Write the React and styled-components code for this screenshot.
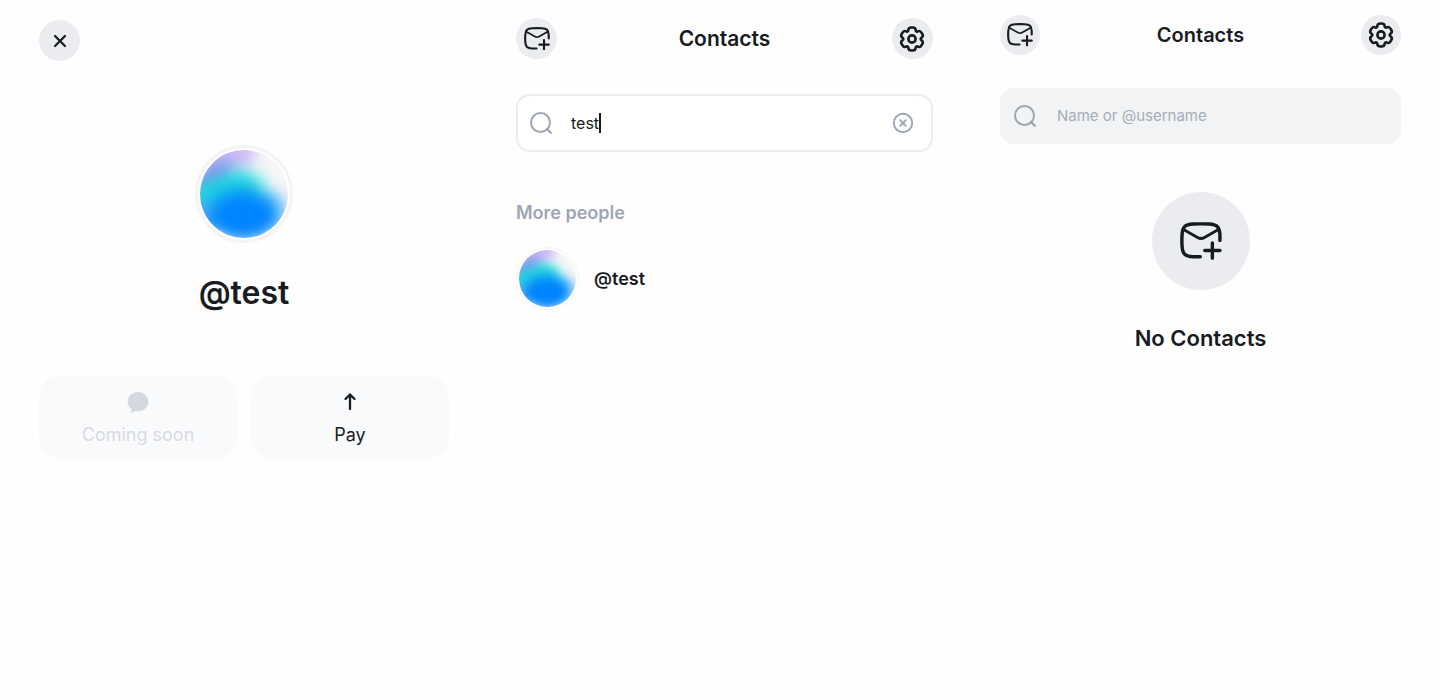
import React, { useId, useState } from 'react'
import styled, { createGlobalStyle } from 'styled-components'

const color = {
  text: '#181b21',
  muted: '#9ea6b3',
  placeholder: '#a6acb8',
  disabled: '#d8dade',
  circle: '#ebecf0',
  field: '#f2f3f5',
  card: '#f9fafc',
  ring: '#f4f4f5',
}

const GlobalStyle = createGlobalStyle`
  * {
    box-sizing: border-box;
  }

  body {
    margin: 0;
    background: #fefefe;
    color: ${color.text};
    font-family: Inter, 'Liberation Sans', sans-serif;
  }

  h1, h2, p, ul {
    margin: 0;
    padding: 0;
  }

  button, input {
    font: inherit;
    color: inherit;
    border: 0;
    padding: 0;
    background: none;
  }
`

const Board = styled.main`
  display: grid;
  grid-template-columns: 410fr 417fr 401fr;
  column-gap: 67px;
  padding: 0 39px;
`

const Screen = styled.section`
  min-width: 0;
  padding-top: ${(props) => props.$top}px;
`

const Profile = styled.div`
  display: flex;
  flex-direction: column;
  align-items: center;
  padding-top: 84px;
`

const ProfileName = styled.h1`
  margin-top: 30px;
  font-size: 32px;
  line-height: 40px;
  font-weight: 600;
`

const CircleButton = styled.button`
  display: flex;
  align-items: center;
  justify-content: center;
  flex: none;
  width: ${(props) => props.$size}px;
  height: ${(props) => props.$size}px;
  border-radius: 50%;
  background: ${color.circle};
`

const AvatarRing = styled.div`
  flex: none;
  width: ${(props) => (props.$large ? 98 : 63)}px;
  height: ${(props) => (props.$large ? 98 : 63)}px;
  padding: 2px;
  border: ${(props) => (props.$large ? 3 : 1)}px solid ${color.ring};
  border-radius: 50%;

  svg {
    display: block;
    width: 100%;
    height: 100%;
  }
`

const Actions = styled.div`
  display: grid;
  grid-template-columns: 1fr 1fr;
  gap: 14px;
  margin-top: 62px;
`

const ActionCard = styled.button`
  display: flex;
  flex-direction: column;
  align-items: center;
  gap: 9px;
  padding: 15px 12px 12px;
  border-radius: 22px;
  background: ${color.card};
  font-size: 18px;
  line-height: 24px;

  &:disabled {
    color: ${color.disabled};
  }
`

const HeaderBar = styled.header`
  display: flex;
  align-items: center;
  justify-content: space-between;
`

const HeaderTitle = styled.h1`
  font-size: ${(props) => props.$size}px;
  line-height: 28px;
  font-weight: 600;
`

const SearchField = styled.label`
  display: flex;
  align-items: center;
  height: ${(props) => (props.$active ? 58 : 56)}px;
  margin-top: ${(props) => (props.$active ? 35 : 33)}px;
  padding: ${(props) => (props.$active ? '0 17px 0 11px' : '0 13px')};
  border: ${(props) => (props.$active ? '2px solid #ebebf0' : '0')};
  border-radius: 14px;
  background: ${(props) => (props.$active ? '#fff' : color.field)};
`

const SearchInput = styled.input`
  field-sizing: ${(props) => (props.$active ? 'content' : 'fixed')};
  flex: ${(props) => (props.$active ? 'none' : '1')};
  min-width: 0;
  margin-left: ${(props) => (props.$active ? 18 : 20)}px;
  font-size: ${(props) => (props.$active ? 16 : 15)}px;
  line-height: 24px;
  outline: none;
  caret-color: transparent;

  &::placeholder {
    color: ${color.placeholder};
    opacity: 1;
  }
`

const Caret = styled.span`
  width: 2px;
  height: 20px;
  background: ${color.text};
`

const ClearButton = styled.button`
  display: flex;
  margin-left: auto;
`

const GroupTitle = styled.h2`
  margin-top: 49px;
  font-size: 18px;
  line-height: 24px;
  font-weight: 600;
  color: ${color.muted};
`

const PeopleList = styled.ul`
  margin-top: 22px;
  list-style: none;
`

const Person = styled.li`
  display: flex;
  align-items: center;
  gap: 15px;
  font-size: 18px;
  line-height: 24px;
  font-weight: 600;
`

const Empty = styled.div`
  display: flex;
  flex-direction: column;
  align-items: center;
  padding-top: 48px;
`

const EmptyBadge = styled.div`
  display: flex;
  align-items: center;
  justify-content: center;
  width: 98px;
  height: 98px;
  border-radius: 50%;
  background: ${color.circle};
`

const EmptyTitle = styled.p`
  margin-top: 34px;
  font-size: 22px;
  line-height: 28px;
  font-weight: 600;
`

const CloseIcon = () => (
  <svg width="14" height="14" viewBox="0 0 14 14" fill="none" stroke="currentColor" strokeWidth="2.2" strokeLinecap="round" aria-hidden="true">
    <path d="M2 2l10 10M12 2L2 12" />
  </svg>
)

const ChatIcon = () => (
  <svg width="24" height="24" viewBox="0 0 72 72" fill="#d5d8de" aria-hidden="true">
    <path d="M36 6C53 6 67 18.500 67 35S53 63.500 36 63.500C33 63.500 30.500 63.200 28 62.600C24 66 19 68 14.500 68C13 68 12.700 66.800 13.600 65.700C15.500 63.300 16.500 60.500 16.800 57.500C9.500 52.200 5 44.200 5 35C5 18.500 19 6 36 6Z" />
  </svg>
)

const ArrowUpIcon = () => (
  <svg width="24" height="24" viewBox="0 0 24 24" fill="none" stroke="currentColor" strokeWidth="2.300" strokeLinecap="round" strokeLinejoin="round" aria-hidden="true">
    <path d="M12 19V4.500M7.500 9L12 4.500L16.500 9" />
  </svg>
)

const EnvelopeAddIcon = ({ width }) => (
  <svg width={width} viewBox="0 0 122 111" fill="none" stroke="currentColor" strokeWidth="10" strokeLinecap="round" strokeLinejoin="round" aria-hidden="true">
    <path d="M116 54V38C115 14 107 7 84 6Q61 5 38 6C15 7 7 14 6 38Q5 54 6 70C7 93 15 100 38 101H59" />
    <path d="M9 21L51 45Q61 51 71 45L113 21" strokeWidth="8" />
    <path d="M94 61V105M72 83H116" />
  </svg>
)

// Six wide teeth: two corners per tooth and one per notch, all rounded.
const gearPoint = (angle, radius) => {
  const a = (angle * Math.PI) / 180
  return [14 + radius * Math.sin(a), 14 - radius * Math.cos(a)]
}
const gearPoints = [0, 60, 120, 180, 240, 300].flatMap((tooth) => [
  gearPoint(tooth - 16, 11.9),
  gearPoint(tooth + 16, 11.9),
  gearPoint(tooth + 30, 7.9),
])
const towards = ([x, y], [tx, ty], t) => `${(x + (tx - x) * t).toFixed(2)} ${(y + (ty - y) * t).toFixed(2)}`
const gearPath = gearPoints
  .map((point, i) => {
    const prev = gearPoints[(i + gearPoints.length - 1) % gearPoints.length]
    const next = gearPoints[(i + 1) % gearPoints.length]
    return `${i === 0 ? 'M' : 'L'}${towards(point, prev, 0.42)}Q${towards(point, point, 0)} ${towards(point, next, 0.42)}`
  })
  .join('')

const SettingsIcon = () => (
  <svg width="28" height="28" viewBox="0 0 28 28" fill="none" stroke="currentColor" strokeWidth="2.600" strokeLinejoin="round" aria-hidden="true">
    <path d={`${gearPath}Z`} />
    <circle cx="14" cy="14" r="3.600" />
  </svg>
)

const SearchIcon = () => (
  <svg width="24" height="24" viewBox="0 0 24 24" fill="none" stroke={color.muted} strokeWidth="2" aria-hidden="true">
    <circle cx="11.500" cy="11.500" r="9.500" />
    <path d="M18 18L21.800 21.800" strokeWidth="2.300" strokeLinecap="round" />
  </svg>
)

const ClearIcon = () => (
  <svg width="22" height="22" viewBox="0 0 22 22" fill="none" stroke={color.muted} strokeWidth="1.900" aria-hidden="true">
    <circle cx="11" cy="11" r="9.200" />
    <path d="M8.200 8.200l5.600 5.600M13.800 8.200l-5.600 5.600" strokeLinecap="round" />
  </svg>
)

const Avatar = ({ large }) => {
  const id = useId()
  return (
    <AvatarRing $large={large}>
      <svg viewBox="0 0 100 100" aria-hidden="true">
        <defs>
          <clipPath id={`${id}-clip`}>
            <circle cx="50" cy="50" r="50" />
          </clipPath>
          <filter id={`${id}-blur`} x="-60%" y="-60%" width="220%" height="220%" colorInterpolationFilters="sRGB">
            <feGaussianBlur stdDeviation="8" />
          </filter>
        </defs>
        <g clipPath={`url(#${id}-clip)`}>
          <rect width="100" height="100" fill="#f6f6f7" />
          <g filter={`url(#${id}-blur)`}>
            <ellipse cx="30" cy="4" rx="34" ry="18" fill="#cfb8f6" />
            <ellipse cx="12" cy="26" rx="28" ry="10" fill="#7f98ea" transform="rotate(-25 12 26)" />
            <ellipse cx="54" cy="42" rx="30" ry="18" fill="#74ece5" transform="rotate(32 54 42)" />
            <ellipse cx="24" cy="47" rx="42" ry="16" fill="#1ad4e0" transform="rotate(-14 24 47)" />
            <ellipse cx="82" cy="72" rx="18" ry="24" fill="#84c4fb" />
            <ellipse cx="4" cy="78" rx="18" ry="20" fill="#5aaaf4" />
            <ellipse cx="48" cy="72" rx="40" ry="30" fill="#12a2f2" />
            <ellipse cx="49" cy="77" rx="36" ry="25" fill="#0084ff" />
            <ellipse cx="94" cy="104" rx="22" ry="14" fill="#d8f2fa" />
          </g>
        </g>
      </svg>
    </AvatarRing>
  )
}

const ContactsHeader = ({ buttonSize, titleSize }) => (
  <HeaderBar>
    <CircleButton $size={buttonSize} aria-label="Invite">
      <EnvelopeAddIcon width={26} />
    </CircleButton>
    <HeaderTitle $size={titleSize}>Contacts</HeaderTitle>
    <CircleButton $size={buttonSize} aria-label="Settings">
      <SettingsIcon />
    </CircleButton>
  </HeaderBar>
)

const ProfileScreen = () => (
  <Screen $top={20}>
    <CircleButton $size={41} aria-label="Close">
      <CloseIcon />
    </CircleButton>
    <Profile>
      <Avatar large />
      <ProfileName>@test</ProfileName>
    </Profile>
    <Actions>
      <ActionCard disabled>
        <ChatIcon />
        Coming soon
      </ActionCard>
      <ActionCard>
        <ArrowUpIcon />
        Pay
      </ActionCard>
    </Actions>
  </Screen>
)

const SearchScreen = () => {
  const [query, setQuery] = useState('test')
  return (
    <Screen $top={18}>
      <ContactsHeader buttonSize={41} titleSize={21} />
      <SearchField $active>
        <SearchIcon />
        <SearchInput
          $active
          aria-label="Search contacts"
          value={query}
          onChange={(e) => setQuery(e.target.value)}
        />
        <Caret />
        <ClearButton aria-label="Clear" onClick={() => setQuery('')}>
          <ClearIcon />
        </ClearButton>
      </SearchField>
      <GroupTitle>More people</GroupTitle>
      <PeopleList>
        <Person>
          <Avatar />
          @test
        </Person>
      </PeopleList>
    </Screen>
  )
}

const EmptyScreen = () => (
  <Screen $top={15}>
    <ContactsHeader buttonSize={40} titleSize={20} />
    <SearchField>
      <SearchIcon />
      <SearchInput aria-label="Search contacts" placeholder="Name or @username" />
    </SearchField>
    <Empty>
      <EmptyBadge>
        <EnvelopeAddIcon width={42} />
      </EmptyBadge>
      <EmptyTitle>No Contacts</EmptyTitle>
    </Empty>
  </Screen>
)

const App = () => (
  <>
    <GlobalStyle />
    <Board>
      <ProfileScreen />
      <SearchScreen />
      <EmptyScreen />
    </Board>
  </>
)

export default App
